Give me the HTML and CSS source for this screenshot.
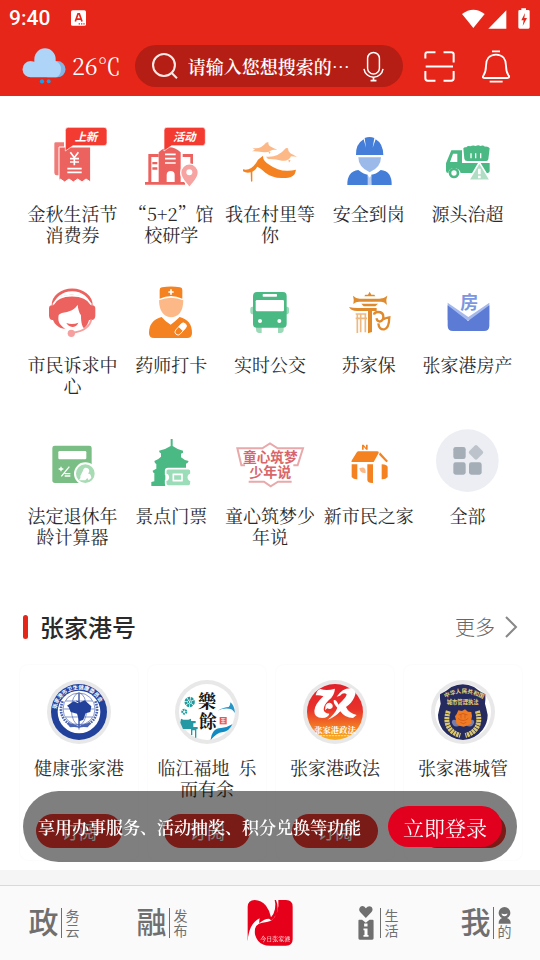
FILE: index.html
```html
<!DOCTYPE html>
<html lang="zh-CN">
<head>
<meta charset="utf-8">
<meta name="viewport" content="width=device-width, initial-scale=1">
<title>今日张家港</title>
<link rel="stylesheet" href="styles.css">
</head>
<body>
<header class="header">
  <div class="status">
    <span class="clock">9:40</span>
    <svg class="status-app" viewBox="213 31 45 47" aria-hidden="true"><rect x="213" y="31" width="45" height="47" rx="5" fill="#fff"/><path d="M226 65 234 42h4l8 23M229 58h14" fill="none" stroke="#e52619" stroke-width="5"/><path d="M236 72h4m3 0h4m3 0h4" stroke="#e52619" stroke-width="4"/></svg>
    <svg class="status-signal" viewBox="578 19 204 63" aria-hidden="true"><g fill="#fff"><path d="M578 37Q612 11 646 37L612 79Z"/><path d="M711 26v55h-54Z"/><path d="M756 20h14v5h7q4 0 4 4v48q0 4-4 4h-26q-4 0-4-4V29q0-4 4-4h5Z"/></g><path d="M767 34 756 56h7l-3 17 13-24h-8Z" fill="#e52619"/></svg>
  </div>
  <div class="topbar">
    <div class="weather">
      <svg viewBox="69 146 126 105" aria-hidden="true"><path d="M150 182h22a24 24 0 0 1 0 49h-30Z" fill="#86b4e2"/><path d="M93 231a24 24 0 0 1-2-49q3 0 12 2v-8a31 31 0 0 1 64 0v7q16 6 16 24 0 17-14 24Z" fill="#aed4f8"/><circle cx="126" cy="243" r="6.500" fill="#14a0ef"/><circle cx="146" cy="243" r="6" fill="#14a0ef"/></svg>
      <span>26℃</span>
    </div>
    <form class="search" role="search">
      <svg class="search-icon" viewBox="454 160 76 76" aria-hidden="true"><g fill="none" stroke="#ffe9e6" stroke-width="6"><circle cx="489" cy="195" r="32"/><path d="m511 218 16 16"/></g></svg>
      <input type="text" aria-label="搜索" placeholder="请输入您想搜索的…">
      <button class="icon-btn" type="button" aria-label="语音搜索"><svg class="mic" viewBox="277 152 64 92"><g fill="none" stroke="#fff" stroke-width="4.500"><rect x="291" y="155" width="36" height="66" rx="18"/><path d="M280 205c2 14 14 26 29 26s27-12 29-26"/><path d="M309 231v10M300 241h18" stroke-width="5"/></g></svg></button>
    </form>
    <button class="icon-btn scan" type="button" aria-label="扫一扫"><svg viewBox="461 152 92 92"><g fill="none" stroke="#fff" stroke-width="6"><path d="M465 174v-12q0-6 6-6h24M519 156h23q7 0 7 6v24M465 211v22q0 7 7 7h23M519 240h23q7 0 7-7v-22"/><path d="M466 198h81"/></g></svg></button>
    <button class="icon-btn bell" type="button" aria-label="通知"><svg viewBox="636 149 84 99"><g fill="none" stroke="#fff" stroke-width="5.500"><path d="M666 153h24M659 244h39"/><path d="M678 163c-21 0-30 15-30 33 0 18-4 24-8 30-3 5-1 7 4 7h68c5 0 7-3 4-7-4-6-8-12-8-30 0-18-9-33-30-33Z"/></g></svg></button>
  </div>
</header>

<main>
<nav class="services" aria-label="服务">
  <a href="#" class="service">
    <svg viewBox="66 54 240 186" aria-hidden="true"><path d="M133 101q0-4 4-4h25v99h-22q-7 0-7-9Z" fill="#ef7c78"/><path d="M147 111h95v105l-14-9-12 9-13-9-13 9-13-9-13 9-13-9-4 5Z" fill="#ec625f" stroke="#fff" stroke-width="3"/><path d="m181 127 12 16 12-16m-25 19h27m-27 10h27m-14-12v22M172 176h43m-43 11h43" fill="none" stroke="#fff" stroke-width="5"/><path d="M175 52h107q9 0 9 9v37q0 9-9 9h-93l-23 16V61q0-9 9-9Z" fill="#f33b32" stroke="#fff" stroke-width="2"/><text x="228" y="92" class="badge-text">上新</text></svg>
    <span>金秋生活节消费券</span></a>
  <a href="#" class="service">
    <svg viewBox="363 54 240 186" aria-hidden="true"><g fill="#ec625f"><path d="M405 216h120v8H405Z"/><path d="M415 132h31v9h-22v78h-9Zm103 0h31v36h-8v-27h-23Z"/><path d="M446 219v-92q32-30 66 0v92h-18v-24q0-12-12-12t-12 12v24Z"/><path d="M427 156h15v7h-15Zm0 16h15v7h-15Z"/></g><path d="M465 133h32m-32 13h32m-32 13h32" stroke="#fff" stroke-width="5"/><path d="M538 233c-10-15-26-27-26-45a26 26 0 0 1 53 0c0 18-17 30-27 45Z" fill="#f6a3a1" stroke="#fff" stroke-width="4"/><circle cx="538" cy="187" r="9" fill="#fff"/><path d="M471 52h106q9 0 9 9v37q0 9-9 9h-92l-23 16V61q0-9 9-9Z" fill="#f33b32" stroke="#fff" stroke-width="2"/><text x="523" y="92" class="badge-text">活动</text></svg>
    <span>“5+2”馆校研学</span></a>
  <a href="#" class="service">
    <svg viewBox="45 54 240 186" aria-hidden="true"><g fill="#fcb987"><path d="M112 113q22 8 41-15l7-2q-1 8 4 12 8 5 23 12-14-3-20 2-8 6-27 4-15-3-29-2l9-5Z"/><path d="M153 140q35 4 60-26l6 1q0 10 7 15l20 10-18-1q-7 16-27 13-22-6-42-5Z"/><path d="m160 124 7 2-4 6Zm60 25 7 2-5 7Z"/></g><path d="M84 178q26 7 45-29l15-12q-1 15 19 27 26 19 55 18 13 0 25-3l-2 8q-1 7-7 10-5 5-14 6-11 2-20 1-30-1-49-16-14-14-24-18-6 11-15 15v29l-4 1-1-28q-13 3-23-3Z" fill="#f58220"/></svg>
    <span>我在村里等你</span></a>
  <a href="#" class="service">
    <svg viewBox="340 54 240 186" aria-hidden="true"><path d="M421 135q-1-33 23-47l7 25-4-29q15-6 29 0l-5 29 9-25q22 12 23 47Z" fill="#447ed8"/><path d="M428 142h68q0 30-34 45-34-15-34-45Z" fill="#9bbaea"/><path d="M428 180q18 14 28 14l3 31h-64q-1-41 33-45Zm67 0q-15 14-28 14l-2 31h63q1-42-33-45Z" fill="#447ed8"/><path d="m456 196 6 7 5-7 1 29h-12Z" fill="#b9cdf0"/></svg>
    <span>安全到岗</span></a>
  <a href="#" class="service">
    <svg viewBox="637 54 240 186" aria-hidden="true"><g fill="#4ab983"><path d="M743 115q3-5 9-3 4-6 12-3 8-5 16-1 8-4 14 0 8-4 14 2 10-1 14 5l-4 33q-1 5-6 5h-57q-8 0-9-7Z"/><path d="M707 121h32v38h83v25q-1 5-6 5h-81q-3-14-19-15-16 0-18 15-7 0-7-7v-22Z"/></g><path d="m712 131-9 25h22v-25Z" fill="#fff"/><path d="M766 130v15m14-15v15m15-15v15" stroke="#fff" stroke-width="4"/><circle cx="715" cy="189" r="12" fill="#fff" stroke="#4ab983" stroke-width="8"/><path d="m791 157 33 54h-65Z" fill="#b0dec5" stroke="#fff" stroke-width="5"/><path d="M791 176v17m0 4v8" stroke="#fff" stroke-width="8"/></svg>
    <span>源头治超</span></a>

  <a href="#" class="service">
    <svg viewBox="66 27 240 186" aria-hidden="true"><path d="M129 106a57 46 0 0 1 115 0" fill="none" stroke="#ec625f" stroke-width="8"/><path d="M134 150h-8q-9-2-9-14v-20q0-10 9-10h4c9-42 99-43 113 0h4q9 1 9 10v20q0 12-9 14h-10c-3 12-8 19-15 25-5-5-9-14-9-39-6-8-9-20-10-32-17 28-49 19-57 31-3 18 0 27 20 42-20-2-32-14-37-27Z" fill="#ec625f"/><path d="M129 104q13-27 57-27t58 27" fill="none" stroke="#fff" stroke-width="5"/><path d="M169 159q18 6 36-1-6 13-18 13-12-1-18-12Z" fill="#ec625f"/><path d="M244 148q-7 33-54 40" fill="none" stroke="#f5a09e" stroke-width="6"/><circle cx="184" cy="190" r="11" fill="#f5a09e"/></svg>
    <span>市民诉求中心</span></a>
  <a href="#" class="service">
    <svg viewBox="363 27 240 186" aria-hidden="true"><path d="M447 91q36-15 73 0-1 50-38 51-34-4-35-51Z" fill="#fcb987"/><path d="M449 86V60q0-7 7-8 27-5 54 0 7 1 7 8v26q-34-16-68 0Z" fill="#f58220"/><path d="M483 58v16m-8-8h16" stroke="#fff" stroke-width="5"/><path d="M482 164q-18-11-27-23-38 10-38 48 0 15 15 15h99q15 0 15-15 0-39-37-48-12 12-27 23Z" fill="#f58220"/><g transform="rotate(-48 512 177)"><rect x="491" y="168" width="42" height="18" rx="9" fill="#f58220" stroke="#fff" stroke-width="2.500"/><path d="M512 168h12a9 9 0 0 1 0 18h-12Z" fill="#fff"/></g></svg>
    <span>药师打卡</span></a>
  <a href="#" class="service">
    <svg viewBox="45 27 240 186" aria-hidden="true"><path d="M106 116q0-6 6-6h104q6 0 6 6v10q0 7-9 7h-98q-9 0-9-7Zm17 55h17v18h-9q-8-2-8-9Zm66 0h17v9q0 8-9 9h-8Z" fill="#9bd9b8"/><path d="M114 78q1-12 12-12h78q11 0 11 12v83q0 12-11 12h-78q-12 0-12-12Z" fill="#4ab983"/><rect x="122" y="90" width="85" height="34" rx="4" fill="#fff"/><rect x="143" y="72" width="43" height="8" rx="2" fill="#fff"/><circle cx="135" cy="153" r="6" fill="#fff"/><circle cx="193" cy="153" r="6" fill="#fff"/></svg>
    <span>实时公交</span></a>
  <a href="#" class="service">
    <svg viewBox="340 27 240 186" aria-hidden="true"><g fill="#e08a2e"><path d="m462 65 5 9h9l3 5h-33l3-5h8Z"/><path d="M412 77q11 11 24 9h52q16 1 27-9l-3 12q0 7 2 16-8-10-18-10h-66q-9 0-17 7 3-13-1-25Z"/><path d="M437 101h50l-8 8h-35Z"/><path d="M400 111q13 4 34 3h49v9h-14v63l-12 4v-67h-33q-18 0-24-12Z"/></g><path d="M420 132h32M425 133v56m10-56v54m14-54v54m-29-42h34" fill="none" stroke="#edb980" stroke-width="5"/><path d="M475 134q1-8 12-8 16 0 16 14 0 12-11 15-9-2-9-10M488 160q2 20 18 18 14-2 15-36-9 1-18 6" fill="none" stroke="#e08a2e" stroke-width="7"/></svg>
    <span>苏家保</span></a>
  <a href="#" class="service">
    <svg viewBox="637 27 240 186" aria-hidden="true"><text x="761" y="117" font-size="54" font-weight="700" fill="#7d97df" text-anchor="middle">房</text><path d="m696 98 62 43 63-43v53H696Z" fill="#a5b9ed"/><path d="m696 106 61 47 64-47v61q0 16-16 16h-93q-16 0-16-16Z" fill="#5b7bd5"/></svg>
    <span>张家港房产</span></a>

  <a href="#" class="service">
    <svg viewBox="66 30 240 186" aria-hidden="true"><path d="M127 84q0-7 7-7h104q7 0 7 7v97q0 8-8 8H135q-8 0-8-8Z" fill="#7bbe85"/><rect x="145" y="93" width="84" height="25" rx="4" fill="#fff"/><path d="M146 147h14m-7-7v14m1 15 24-29M164 161h17m-17 7h17" stroke="#fff" stroke-width="4"/><circle cx="226" cy="161" r="31" fill="#a7dbb4" stroke="#fff" stroke-width="6"/><path d="M225 143q11-1 13 9 0 6-5 8 10 1 11 14l-8 7-4-7-6 7h-21q8-4 6-13l7-14q2-9 7-11Z" fill="#fff"/></svg>
    <span>法定退休年龄计算器</span></a>
  <a href="#" class="service">
    <svg viewBox="363 30 240 186" aria-hidden="true"><path d="M482 57h6v21q13 10 31 14v6l-6 3v11q8 8 23 11-2 7-8 8v17q5 6 12 7l-5 5h-69v38h-42v-12l9-2v-25q-5 0-5-7l11-6v-14q-5-1-6-9 12-4 20-13v-10q-5-1-6-8 19-3 35-14Z" fill="#4ab983"/><path d="M474 146h62q7 0 7 7v10q-8 2-8 9t8 10v8q0 8-7 8h-62q-7 0-7-8v-8q8-3 8-10t-8-9v-10q0-7 7-7Z" fill="#9bdcb9" stroke="#fff" stroke-width="5"/><path d="M488 163h30m-30 19h30M490 161v22m26-22v22" stroke="#fff" stroke-width="5"/></svg>
    <span>景点门票</span></a>
  <a href="#" class="service">
    <svg viewBox="45 30 240 186" aria-hidden="true"><path d="M90 136H79L67 85h75l23-15 23 15h76l-16 51h-13M101 185h46l20 14 22-14h41" fill="none" stroke="#e9a9ab" stroke-width="6"/><text x="166" y="126" font-size="41" class="youth-text">童心筑梦</text><text x="166" y="171" font-size="42" class="youth-text">少年说</text></svg>
    <span>童心筑梦少年说</span></a>
  <a href="#" class="service">
    <svg viewBox="340 30 240 186" aria-hidden="true"><g fill="#f58220"><path d="M439 89V74h5l7 9v-9h5v15h-5l-7-9v9Z"/><path d="M428 94h57q6 1 4 5l-15 27h-66q-2-1 1-6l13-21q2-4 6-5Z"/><path d="m493 97 24 26-5 4-22-23Z"/><path d="M408 133h17v45q-11 1-17-7Zm47 0h17v56q-16 1-17-9Zm43 0q18 1 18 9v29q-6 8-18 7Z"/></g><path d="M431 145q20-8 19 14-17 2-19-14Z" fill="#fcb987"/></svg>
    <span>新市民之家</span></a>
  <a href="#" class="service">
    <svg viewBox="637 30 240 186" aria-hidden="true"><circle cx="755" cy="122" r="94" fill="#eceef3"/><g fill="#a5adb7"><rect x="713" y="81" width="37" height="36" rx="7"/><rect x="713" y="127" width="37" height="37" rx="7"/><rect x="760" y="127" width="38" height="37" rx="7"/></g><rect x="764" y="80" width="34" height="34" rx="6" transform="rotate(45 781 97)" fill="#bdc3cb"/></svg>
    <span>全部</span></a>
</nav>

<section class="accounts">
  <div class="section-head">
    <h2>张家港号</h2>
    <a href="#" class="more">更多<svg viewBox="0 0 12 22" aria-hidden="true"><path d="m1 1 10 10L1 21" fill="none" stroke="#888" stroke-width="2"/></svg></a>
  </div>
  <div class="cards">
    <article class="card">
      <svg viewBox="141 239 192 192" aria-hidden="true"><circle cx="237" cy="335" r="96" fill="#e8e8e8"/><circle cx="237" cy="335" r="84" fill="#22419b"/><circle cx="237" cy="335" r="64" fill="#fff"/><path id="ring-a" d="M169 335a68 68 0 0 1 136 0" fill="none"/><text font-size="16" font-weight="700" fill="#fff"><textPath href="#ring-a" startOffset="8">张家港市卫生健康委员会</textPath></text><g fill="none" stroke="#4b65b2" stroke-width="2"><circle cx="237" cy="326" r="48"/><ellipse cx="237" cy="326" rx="23" ry="48"/><path d="M237 276v112M190 326h94M197 302h80M197 350h80"/><path d="M188 303c-13 31 0 58 24 70m74-70c13 31 0 58-24 70" stroke-width="8" stroke-dasharray="5 3"/></g><path d="m201 316 20-13 14 6 19-9 20 18-3 17-14 4-7 19-12 5-7-23-19-5-6-14Z" fill="#22419b"/><path d="M237 280v98m-8-76q20 6 8 16-15 11 0 19 13 9 0 19" fill="none" stroke="#22419b" stroke-width="3"/><path d="M199 367q20 1 38 11 17-11 38-11l-12 14q-26-3-26 5 0-8-27-5Z" fill="#4b65b2"/></svg>
      <h3>健康张家港</h3><button type="button">订阅</button>
    </article>
    <article class="card">
      <svg viewBox="525 239 192 192" aria-hidden="true"><circle cx="621" cy="335" r="96" fill="#e8e8e8"/><circle cx="621" cy="335" r="84" fill="#fff"/><g fill="none" stroke="#219b9d"><circle cx="569" cy="305" r="11" stroke-width="9" stroke-dasharray="7 2"/><circle cx="569" cy="305" r="4" stroke-width="3"/><circle cx="553" cy="334" r="6" stroke-width="6" stroke-dasharray="5 2"/></g><path d="M543 355q14 7 30 0v7h14v7h-7v11h13v7h-4v25h-4v-22h-8v14h-4v-18h-24l-8-19Z" fill="#2499a4"/><path d="M653 331q19-11 33-11 6-7 5-14 12 8 14 32-9-14-19-13-17-2-33 6Z" fill="#2496c7"/><path d="M632 419q4-36 31-36 18-1 34-11-9 22-31 24-14 1-34 23Z" fill="#128bc3"/><text x="621" y="322" font-size="54" text-anchor="middle" class="calligraphy">樂</text><text x="624" y="383" font-size="54" text-anchor="middle" class="calligraphy">餘</text><rect x="659" y="350" width="21" height="22" fill="#e45858"/><path d="M663 355h13m-13 6h13m-13 6h13m-7-14v16" stroke="#fff" stroke-width="2"/></svg>
      <h3>临江福地&nbsp; 乐而有余</h3><button type="button">订阅</button>
    </article>
    <article class="card">
      <svg viewBox="99 239 192 192" aria-hidden="true"><defs><linearGradient id="sunset" x2="0" y2="1"><stop offset="0" stop-color="#e3202b"/><stop offset=".45" stop-color="#e8312a"/><stop offset="1" stop-color="#fab31d"/></linearGradient></defs><circle cx="195" cy="335" r="96" fill="#e8e8e8"/><circle cx="195" cy="335" r="84" fill="url(#sunset)"/><g fill="#fff"><path d="M137 285q4-17 14-19 20 6 44-1-2 22-19 35-15 15-15 27 0 12 17 13-3 12-21 13-25-1-24-22 2-20 27-43-12-5-23-3Z"/><path d="M200 289q19-28 45-25 18 7 8 27-8 18-25 29 8 18 32 24l-11 9q-25 0-38-20-16 18-38 25 23-19 29-36-12-10-11-22 7-3 12 8l2 5q24-21 25-31-9-8-20 4Z"/><path d="M167 315q5-10 15-7 9 5 5 14-7 7-15 2l-7 6Z"/></g><text x="195" y="398" font-size="25" text-anchor="middle" fill="#fff" class="calligraphy-small">张家港政法</text><path d="M150 406h90" stroke="#fff" stroke-width="2" stroke-dasharray="7 2"/></svg>
      <h3>张家港政法</h3><button type="button">订阅</button>
    </article>
    <article class="card">
      <svg viewBox="483 239 192 192" aria-hidden="true"><circle cx="579" cy="335" r="96" fill="#e8e8e8"/><circle cx="579" cy="335" r="84" fill="#fff"/><path d="M510 282q17-8 34-22 35-16 68 0 17 14 34 22 1 16-1 28 5 17 8 34 0 24-15 44-23 29-59 31-37-2-61-31-14-21-14-44 3-17 8-34-3-13-2-28Z" fill="#252b5f"/><path id="ring-b" d="M526 293q53-29 108 0" fill="none"/><g fill="#f0d373" font-weight="700"><text font-size="17"><textPath href="#ring-b">中华人民共和国</textPath></text><text x="578" y="310" font-size="16" text-anchor="middle">城市管理执法</text></g><path d="M535 332c-13 39 4 65 36 73m51-73c13 39-4 65-36 73" fill="none" stroke="#ddc76d" stroke-width="15" stroke-dasharray="7 2"/><path d="M548 359q14-3 23 16-20 11-26-10m65-6q-14-3-23 16 20 11 26-10" fill="#787daa"/><path d="m560 341 5-11 11 2 9-5 9 7 10 1 2 12-2 11 1 12-12 5-12 4-13-3-9-6-1-10-3-12Z" fill="#ef7b24"/><path d="M566 344q12-9 27 0m-29 10q15 13 31 0m-24 12q9 8 18 0m-16-24v12m12-12v12" fill="none" stroke="#c84e16" stroke-width="2"/></svg>
      <h3>张家港城管</h3><button type="button">订阅</button>
    </article>
  </div>
</section>
</main>

<aside class="login-bar">
  <p>享用办事服务、活动抽奖、积分兑换等功能</p>
  <button type="button">立即登录</button>
</aside>

<nav class="tabs" aria-label="主导航">
  <a href="#" class="tab"><b>政</b><span class="pair"><i>务</i><i>云</i></span></a>
  <a href="#" class="tab"><b>融</b><span class="pair"><i>发</i><i>布</i></span></a>
  <a href="#" class="tab" aria-label="首页"><svg class="logo" viewBox="739 358 138 138"><path d="M741 482V378q1-20 21-20 20 1 34 17 12 16 15 35 9-10 12-25 3-14-1-27h34q20 0 20 20v98q0 19-20 19h-47q-25 0-37-15-12-15-10-37-17 8-21 39Z" fill="#e60019"/><path d="M741 483q3-54 36-70-2 10-1 15 13-14 29-14 4 2 6 6 19-15 20-37 0-14-5-25h7q4 41-21 62-14 4-27 6-23 2-24 32-14 8-20 25Z" fill="#fff"/><text x="824" y="482" font-size="18" text-anchor="middle" class="logo-text">今日张家港</text></svg></a>
  <a href="#" class="tab"><svg class="life" viewBox="261 377 47 101"><g fill="#6f6f6f"><path d="m284 413-17-18q-6-9 1-16 9-5 16 5 8-10 17-4 6 7 0 15Z"/><path d="M264 418h9l11 9 11-9h9q3 0 3 3v52q0 4-4 4h-37q-4 0-4-4v-52q0-3 2-3Z"/></g><path d="M279 429h10v9h-10Zm-2 15h12v19h3v5h-15v-5h3v-14h-3Z" fill="#fff"/></svg><span class="pair"><i>生</i><i>活</i></span></a>
  <a href="#" class="tab"><b>我</b><span class="pair"><svg class="person" viewBox="680 377 38 52" aria-hidden="true"><path d="M681 428q0-13 11-17h14q12 4 12 17Z" fill="#6f6f6f"/><circle cx="699" cy="395" r="18" fill="#6f6f6f"/><path d="M690 397q9 5 18 0-1 8-9 8t-9-8Z" fill="#fff"/></svg><i>的</i></span></a>
</nav>
</body>
</html>
```

FILE: styles.css
```css
:root {
  --red: #e52619;
  --ink: #2a2a2a;
  --grey: #6f6f6f;
  --serif: "Noto Serif CJK SC", "Noto Sans CJK SC", serif;
  --sans: "Noto Sans CJK SC", "Noto Sans", sans-serif;
}

* { box-sizing: border-box; }

body {
  margin: 0;
  min-height: 100vh;
  padding-bottom: 90px;
  background: #f5f5f5;
  color: var(--ink);
  font-family: var(--serif);
}

a { color: inherit; text-decoration: none; }
button, input { font: inherit; color: inherit; border: 0; background: none; padding: 0; }
button { cursor: pointer; }
h2, h3, p { margin: 0; font-weight: 400; }
svg { display: block; overflow: visible; flex: none; }
svg text { font-family: var(--sans); }

.header { background: var(--red); color: #fff; padding-bottom: 9px; }

.status { display: flex; align-items: center; height: 36px; padding: 0 10px 0 9px; }
.clock { font: 500 21px/24px Roboto, sans-serif; }
.status-app { width: 15px; height: 16px; margin-left: 21px; }
.status-signal { width: 68px; height: 21px; margin-left: auto; }

.topbar { display: flex; align-items: center; margin-top: 9px; padding: 0 30px 0 23px; }
.weather { display: flex; align-items: center; gap: 7px; font-size: 23px; line-height: 30px; }
.weather svg { width: 42px; height: 35px; }

.search {
  display: flex;
  align-items: center;
  flex: 1;
  min-width: 0;
  height: 42px;
  margin: 0 21px 0 14px;
  padding: 0 19px 0 17px;
  border-radius: 21px;
  background: #b51e14;
}
.search-icon { width: 26px; height: 26px; }
.search input { flex: 1; min-width: 0; margin-left: 10px; height: 30px; font-size: 18px; font-weight: 600; outline: 0; }
.search input::placeholder { color: #fff; opacity: 1; }
.mic { width: 21px; height: 31px; }
.scan svg { width: 31px; height: 31px; }
.bell { margin-left: 27px; }
.bell svg { width: 28px; height: 33px; }

.services {
  display: grid;
  grid-template-columns: repeat(5, 1fr);
  row-gap: 34px;
  padding: 32px 23px 62px;
  background: #fff;
}
.service { display: flex; flex-direction: column; align-items: center; gap: 13px; font-size: 18px; line-height: 21px; text-align: center; }
.service svg { width: 80px; height: 62px; }
.service span { min-height: 21px; max-width: 94px; }
.badge-text { font-size: 34px; font-weight: 700; font-style: italic; fill: #fff; text-anchor: middle; }
.youth-text { font-weight: 700; fill: #d9666a; text-anchor: middle; }

.accounts { padding-bottom: 10px; background: #fff; }
.section-head { display: flex; align-items: center; justify-content: space-between; height: 36px; padding: 0 23px; font-family: var(--sans); }
.section-head h2 { display: flex; align-items: center; gap: 12px; font-size: 24px; line-height: 36px; font-weight: 500; }
.section-head h2::before { content: ""; width: 5px; height: 24px; border-radius: 3px; background: var(--red); }
.more { display: flex; align-items: center; gap: 10px; font-size: 20px; line-height: 30px; font-weight: 300; color: #666; }
.more svg { width: 12px; height: 22px; }

.cards { display: grid; grid-template-columns: repeat(4, 1fr); gap: 10px; padding: 20px 18px 0 20px; }
.card { display: flex; flex-direction: column; align-items: center; padding: 15px 4px 12px; border-radius: 8px; box-shadow: 0 0 2px #f4f4f4; }
.card > svg { width: 64px; height: 64px; }
.card h3 { min-height: 42px; margin: 13px 0 15px; font-size: 18px; line-height: 21px; text-align: center; }
.card button { width: 86px; height: 34px; margin-top: auto; border-radius: 17px; background: #f2362f; color: #fff; font-size: 18px; line-height: 34px; font-family: var(--sans); }
svg .calligraphy { font-family: var(--serif); font-weight: 700; fill: #151515; }
svg .calligraphy-small { font-family: var(--serif); font-weight: 700; }

.login-bar {
  position: fixed;
  right: 23px;
  bottom: 98px;
  left: 23px;
  display: flex;
  align-items: center;
  justify-content: space-between;
  height: 71px;
  padding: 0 15px;
  border-radius: 36px;
  background: rgba(0, 0, 0, .5);
  color: #fff;
}
.login-bar p { font-size: 17px; line-height: 24px; font-weight: 600; white-space: nowrap; }
.login-bar button { width: 114px; height: 41px; border-radius: 21px; background: #e2001f; font-size: 21px; line-height: 38px; }

.tabs {
  position: fixed;
  right: 0;
  bottom: 0;
  left: 0;
  display: grid;
  grid-template-columns: repeat(5, 1fr);
  height: 75px;
  border-top: 1px solid #d9d9d9;
  background: #fafafa;
  color: var(--grey);
  font-family: var(--sans);
}
.tab { display: flex; align-items: center; justify-content: center; gap: 2px; }
.tab b { margin-bottom: 6px; font-size: 30px; line-height: 32px; font-weight: 500; }
.pair { display: flex; flex-direction: column; align-items: center; padding-left: 4px; border-left: 1px solid var(--grey); }
.pair i { font-size: 14px; line-height: 15px; font-style: normal; }
.logo { width: 46px; height: 46px; }
svg .logo-text { font-family: var(--serif); fill: #fff; }
.life { width: 16px; height: 34px; margin-right: 4px; }
.person { width: 13px; height: 17px; }
```
